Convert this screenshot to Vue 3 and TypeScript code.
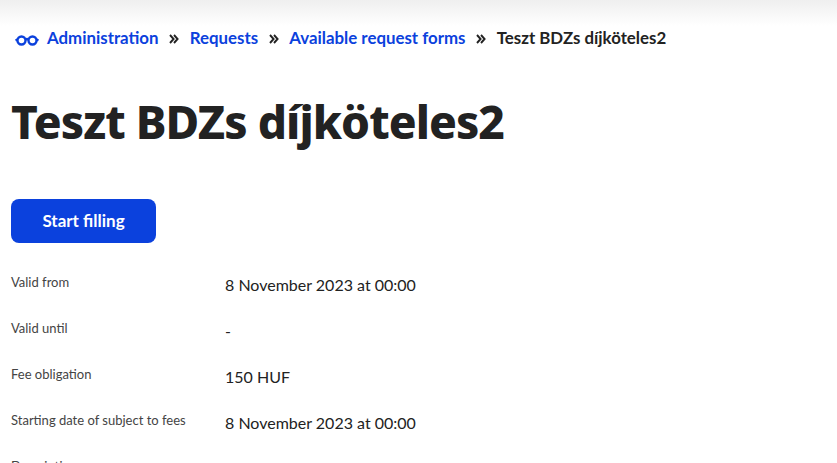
<template>
    <div class="page">
        <nav class="crumbs">
            <svg class="glasses" width="24" height="12" viewBox="0 0 24 12" fill="none" stroke="#0b41dd" stroke-width="2.4">
                <circle cx="6.5" cy="6.5" r="4" />
                <circle cx="17.5" cy="6.5" r="4" />
                <path d="M10.5 5.5 Q12 4.6 13.5 5.5 M2.5 5.5 L0.5 6.5 M21.5 5.5 L23.5 6.5" />
            </svg>
            <template v-for="(item, i) in crumbs" :key="item">
                <svg v-if="i > 0" class="sep" width="10" height="10" viewBox="0 0 10 10" fill="none" stroke="#222" stroke-width="1.9">
                    <path d="M1 1 L4.6 5 L1 9 M5 1 L8.6 5 L5 9" />
                </svg>
                <a class="crumb">{{ item }}</a>
            </template>
            <svg class="sep" width="10" height="10" viewBox="0 0 10 10" fill="none" stroke="#222" stroke-width="1.9">
                <path d="M1 1 L4.6 5 L1 9 M5 1 L8.6 5 L5 9" />
            </svg>
            <span class="current">Teszt BDZs díjköteles2</span>
        </nav>

        <h1 class="title">Teszt BDZs díjköteles2</h1>

        <button class="start" type="button">Start filling</button>

        <dl class="fields">
            <div v-for="row in rows" :key="row.label" class="field">
                <dt>{{ row.label }}</dt>
                <dd>{{ row.value }}</dd>
            </div>
        </dl>
    </div>
</template>

<script setup lang="ts">
interface Row {
    label: string;
    value: string;
}

const crumbs: string[] = ['Administration', 'Requests', 'Available request forms'];

const rows: Row[] = [
    { label: 'Valid from', value: '8 November 2023 at 00:00' },
    { label: 'Valid until', value: '-' },
    { label: 'Fee obligation', value: '150 HUF' },
    { label: 'Starting date of subject to fees', value: '8 November 2023 at 00:00' },
    { label: 'Description', value: '' },
];
</script>

<style>
html, body {
    overflow: hidden;
    background: #fff;
}
</style>

<style scoped>
.page {
    height: 463px;
    overflow: hidden;
    padding: 0 11px;
    box-sizing: border-box;
    font-family: Lato, sans-serif;
    color: #222;
    background: linear-gradient(#efefef 0, #fff 26px);
}
.crumbs {
    display: flex;
    align-items: center;
    height: 24px;
    padding: 25px 0 0 4px;
    font-size: 16.85px;
    font-weight: 700;
}
.glasses {
    margin-right: 8px;
    margin-top: 5px;
}
.crumb {
    color: #0b41dd;
}
.sep {
    margin: 3px 10.6px 0;
}
.current {
    color: #222;
}
.title {
    margin: 36px 0 0;
    font-family: "Noto Sans", sans-serif;
    font-size: 46px;
    line-height: 72px;
    font-weight: 800;
    letter-spacing: -0.95px;
    color: #222;
}
.start {
    display: block;
    width: 145px;
    height: 44px;
    margin-top: 42px;
    padding: 0 0 2px;
    border: 0;
    border-radius: 8px;
    background: #0b41dd;
    color: #fff;
    font-family: Lato, sans-serif;
    font-size: 17px;
    font-weight: 700;
}
.fields {
    margin: 19px 0 0;
}
.field {
    display: flex;
    height: 46px;
}
dt {
    width: 214px;
    padding-top: 11px;
    font-size: 13px;
    line-height: 18px;
    color: #444;
}
dd {
    margin: 0;
    padding-top: 11px;
    font-size: 16px;
    line-height: 24px;
    color: #222;
}
</style>
